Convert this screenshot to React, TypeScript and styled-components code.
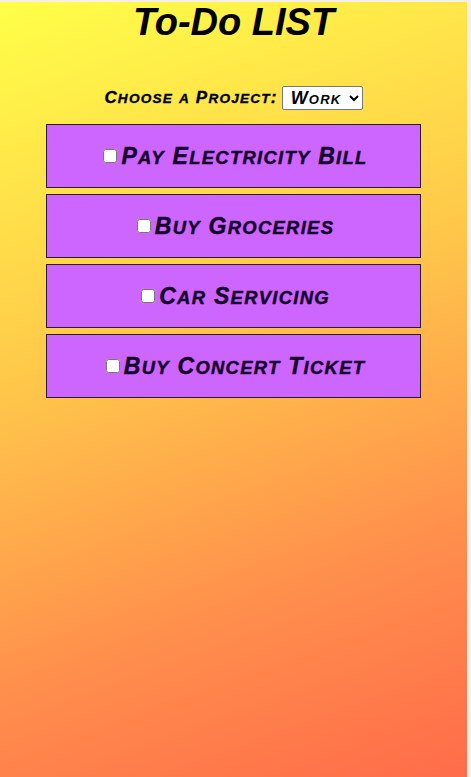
import React from "react";
import styled, { createGlobalStyle } from "styled-components";

const GlobalStyle = createGlobalStyle`
  html, body {
    margin: 0;
    padding: 0;
    background: #f4efe9;
  }
  body {
    font-family: "Liberation Sans", Arial, sans-serif;
  }
`;

const Page = styled.div`
  box-sizing: border-box;
  margin-top: 2px;
  width: calc(100% - 4px);
  min-height: 775px;
  background: linear-gradient(160deg, #ffff48 0%, #ffc94a 40%, #ff8c4c 75%, #ff6c4a 100%);
  display: flex;
  flex-direction: column;
  align-items: center;
`;

const Title = styled.h1`
  margin: 0;
  font-size: 38px;
  font-weight: 700;
  font-style: italic;
  color: #000;
  line-height: 40px;
`;

const ProjectRow = styled.div`
  margin-top: 44px;
  display: flex;
  align-items: center;
  gap: 4px;
`;

const Label = styled.label`
  font-size: 17px;
  font-weight: 700;
  font-style: italic;
  letter-spacing: 1.2px;
  -webkit-text-stroke: 0.35px #000;
  color: #000;
`;

const Small = styled.span`
  font-size: 0.8em;
  text-transform: uppercase;
`;

const Select = styled.select`
  font-family: "Liberation Sans", Arial, sans-serif;
  font-size: 18px;
  font-weight: 700;
  font-style: italic;
  font-variant: small-caps;
  letter-spacing: 1.2px;
  color: #000;
  background: #fff;
  border: 1px solid #767676;
  border-radius: 2px;
  height: 24px;
  padding: 0 4px 0 4px;
`;

const List = styled.ul`
  list-style: none;
  margin: 14px 0 0;
  padding: 0;
  width: 375px;
  display: flex;
  flex-direction: column;
  gap: 6px;
`;

const Card = styled.li`
  box-sizing: border-box;
  height: 64px;
  border: 1px solid #2a1a2a;
  background: #cc66ff;
  display: flex;
  align-items: center;
  justify-content: center;
`;

const Check = styled.input`
  margin: 3px 4px 3px 4px;
  width: 14px;
  height: 14px;
`;

const TaskText = styled.span`
  font-size: 23px;
  font-weight: 700;
  font-style: italic;
  letter-spacing: 1.3px;
  -webkit-text-stroke: 0.45px #14002a;
  color: #14002a;
`;

function SmallCaps({ text }: { text: string }) {
  const parts: React.ReactNode[] = [];
  const re = /([a-z]+)|([^a-z]+)/g;
  let m: RegExpExecArray | null;
  let i = 0;
  while ((m = re.exec(text))) {
    if (m[1]) parts.push(<Small key={i++}>{m[1]}</Small>);
    else parts.push(<React.Fragment key={i++}>{m[2]}</React.Fragment>);
  }
  return <>{parts}</>;
}

const tasks = [
  "Pay Electricity Bill",
  "Buy Groceries",
  "Car Servicing",
  "Buy Concert Ticket",
];

export default function App() {
  return (
    <>
      <GlobalStyle />
      <Page>
        <Title>To-Do LIST</Title>
        <ProjectRow>
          <Label htmlFor="project">
            <SmallCaps text="Choose a Project:" />
          </Label>
          <Select id="project" defaultValue="work">
            <option value="work">Work</option>
            <option value="home">Home</option>
          </Select>
        </ProjectRow>
        <List>
          {tasks.map((t) => (
            <Card key={t}>
              <Check type="checkbox" />
              <TaskText>
                <SmallCaps text={t} />
              </TaskText>
            </Card>
          ))}
        </List>
      </Page>
    </>
  );
}
